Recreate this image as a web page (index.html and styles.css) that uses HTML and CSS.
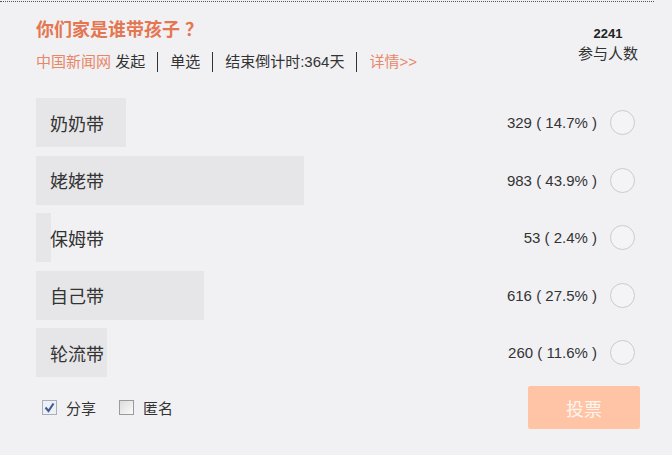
FILE: index.html
```html
<!DOCTYPE html>
<html lang="zh-CN">
<head>
  <meta charset="UTF-8">
  <title>投票</title>
  <link rel="stylesheet" href="styles.css">
</head>
<body>
  <div class="rule"></div>

  <div class="poll">
    <div class="head">
      <div class="head-main">
        <h1 class="title">你们家是谁带孩子 ？</h1>
        <div class="meta">
          <span><em>中国新闻网</em> 发起</span>
          <i class="sep"></i>
          <span>单选</span>
          <i class="sep"></i>
          <span>结束倒计时:364天</span>
          <i class="sep"></i>
          <a class="more" href="#">详情&gt;&gt;</a>
        </div>
      </div>
      <div class="stats">
        <b>2241</b>
        <span>参与人数</span>
      </div>
    </div>

    <ul class="options">
      <li class="option">
        <span class="fill" style="width:14.7%"></span>
        <span class="label">奶奶带</span>
        <span class="count">329 ( 14.7% )</span>
        <span class="radio"></span>
      </li>
      <li class="option">
        <span class="fill" style="width:43.9%"></span>
        <span class="label">姥姥带</span>
        <span class="count">983 ( 43.9% )</span>
        <span class="radio"></span>
      </li>
      <li class="option">
        <span class="fill" style="width:2.4%"></span>
        <span class="label">保姆带</span>
        <span class="count">53 ( 2.4% )</span>
        <span class="radio"></span>
      </li>
      <li class="option">
        <span class="fill" style="width:27.5%"></span>
        <span class="label">自己带</span>
        <span class="count">616 ( 27.5% )</span>
        <span class="radio"></span>
      </li>
      <li class="option">
        <span class="fill" style="width:11.6%"></span>
        <span class="label">轮流带</span>
        <span class="count">260 ( 11.6% )</span>
        <span class="radio"></span>
      </li>
    </ul>

    <div class="foot">
      <label class="check">
        <span class="box checked">
          <svg viewBox="0 0 15 15" width="15" height="15"><path d="M3.5 7.5 L6.5 11 L11.5 3.5" fill="none" stroke="#3f5f92" stroke-width="2.2"/></svg>
        </span>
        分享
      </label>
      <label class="check">
        <span class="box"></span>
        匿名
      </label>
      <button class="vote">投票</button>
    </div>
  </div>
</body>
</html>
```

FILE: styles.css
```css
* {
  margin: 0;
  padding: 0;
  box-sizing: border-box;
}

body {
  font-family: "Liberation Sans", "Noto Sans CJK SC", sans-serif;
  background: #f1f1f3;
  color: #333;
  width: 672px;
  height: 455px;
  overflow: hidden;
}

.rule {
  width: 654px;
  border-top: 1px dotted #555;
  margin-top: 1px;
}

.poll {
  width: 646px;
  padding-left: 36px;
}

.head {
  display: flex;
  justify-content: space-between;
  height: 96px;
}

.title {
  font-size: 18px;
  font-weight: bold;
  color: #e47652;
  line-height: 24px;
  margin-top: 16px;
}

.meta {
  display: flex;
  align-items: center;
  margin-top: 10px;
  font-size: 15px;
  line-height: 20px;
  color: #333;
}

.meta em {
  font-style: normal;
  color: #e8866a;
}

.sep {
  width: 1px;
  height: 20px;
  background: #333;
  margin: 0 12px;
}

.more {
  color: #e8866a;
  text-decoration: none;
}

.stats {
  display: flex;
  flex-direction: column;
  align-items: center;
  margin-top: 23px;
  margin-right: 8px;
}

.stats b {
  font-size: 13px;
  line-height: 18px;
  color: #222;
}

.stats span {
  font-size: 15px;
  line-height: 22px;
  color: #333;
}

.options {
  list-style: none;
  display: flex;
  flex-direction: column;
  gap: 8.5px;
}

.option {
  position: relative;
  display: flex;
  align-items: center;
  height: 49px;
  width: 610px;
}

.fill {
  position: absolute;
  left: 0;
  top: 0;
  bottom: 0;
  background: #e6e6e8;
}

.label {
  position: relative;
  padding-left: 14px;
  font-size: 18px;
  color: #333;
  flex: 1;
}

.count {
  position: relative;
  font-size: 15px;
  color: #333;
  margin-right: 13px;
}

.radio {
  position: relative;
  width: 25px;
  height: 25px;
  border: 1.5px solid #cbcbcd;
  border-radius: 50%;
  background: #f4f4f6;
  margin-right: 11px;
}

.foot {
  display: flex;
  align-items: center;
  margin-top: 9px;
  padding-left: 6px;
}

.check {
  display: flex;
  align-items: center;
  gap: 9px;
  font-size: 15px;
  color: #333;
  margin-right: 23px;
}

.box {
  display: block;
  width: 15px;
  height: 15px;
  border: 1px solid #9a9a9c;
  background: linear-gradient(135deg, #dcdcdc, #fafafa);
}

.box.checked {
  border-color: #a8b0c0;
  background: #eef0f6;
}

.box svg {
  display: block;
  margin: -1px;
}

.vote {
  margin-left: auto;
  margin-right: 6px;
  width: 112px;
  height: 43px;
  border: none;
  border-radius: 2px;
  background: #ffc4a5;
  color: #fff4ee;
  font-family: "Noto Sans CJK SC", sans-serif;
  font-size: 18px;
}
```
